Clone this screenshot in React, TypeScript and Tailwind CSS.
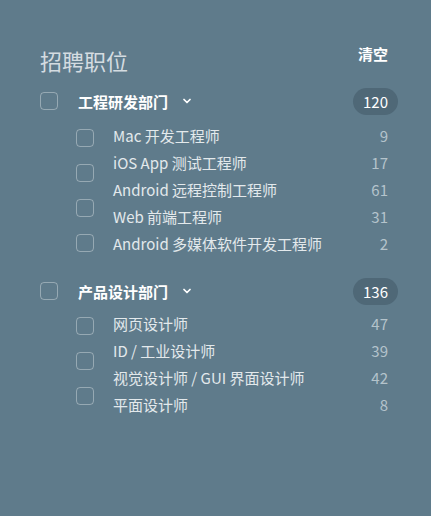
import { ChevronDown } from "lucide-react";

type Job = { title: string; count: number };
type Dept = { name: string; total: number; jobs: Job[] };

const depts: Dept[] = [
  {
    name: "工程研发部门",
    total: 120,
    jobs: [
      { title: "Mac 开发工程师", count: 9 },
      { title: "iOS App 测试工程师", count: 17 },
      { title: "Android 远程控制工程师", count: 61 },
      { title: "Web 前端工程师", count: 31 },
      { title: "Android 多媒体软件开发工程师", count: 2 },
    ],
  },
  {
    name: "产品设计部门",
    total: 136,
    jobs: [
      { title: "网页设计师", count: 47 },
      { title: "ID / 工业设计师", count: 39 },
      { title: "视觉设计师 / GUI 界面设计师", count: 42 },
      { title: "平面设计师", count: 8 },
    ],
  },
];

const Box = () => (
  <span className="block w-[18px] h-[18px] shrink-0 rounded-[4px] border-[1.5px] border-white/35" />
);

const Group = ({ dept, first }: { dept: Dept; first: boolean }) => {
  // checkboxes sit in their own column; there are fewer of them than rows
  const boxes = dept.jobs.slice(1);
  return (
    <div className={first ? "mt-[11px]" : "mt-[20px]"}>
      {/* Department header */}
      <div className="flex items-center h-[28px]">
        <Box />
        <span className="ml-[20px] text-[15px] font-bold text-white leading-none">{dept.name}</span>
        <ChevronDown className="ml-[13px] w-[12px] h-[12px] text-white" strokeWidth={3.5} />
        <span className="ml-auto -mr-[10px] h-[27px] px-[10px] rounded-full bg-[#4f6877] text-white text-[15px] leading-[27px]">
          {dept.total}
        </span>
      </div>

      {/* Jobs */}
      <div className={`flex ml-[36px] ${first ? "mt-[7px]" : "mt-[5px]"}`}>
        <div className="flex flex-col gap-[17px] pt-[7px]">
          {boxes.map((j) => (
            <Box key={j.title} />
          ))}
        </div>
        <ul className="flex-1 ml-[19px]">
          {dept.jobs.map((j) => (
            <li key={j.title} className="flex justify-between text-[15px] leading-[27px]">
              <span className="text-[#e3e9ec]">{j.title}</span>
              <span className="text-[#b4c3cb]">{j.count}</span>
            </li>
          ))}
        </ul>
      </div>
    </div>
  );
};

export default function App() {
  return (
    <div
      className="w-[431px] h-[516px] bg-[#5f7b8b] pl-[40px] pr-[43px] pt-[44px]"
      style={{ fontFamily: '"Noto Sans CJK SC", "Noto Sans", sans-serif' }}
    >
      <div className="flex items-start justify-between">
        <h1 className="text-[22px] leading-[32px] text-[#d4dce1]">招聘职位</h1>
        <button className="text-[15px] leading-[20px] font-bold text-white">清空</button>
      </div>
      {depts.map((d, i) => (
        <Group key={d.name} dept={d} first={i === 0} />
      ))}
    </div>
  );
}
